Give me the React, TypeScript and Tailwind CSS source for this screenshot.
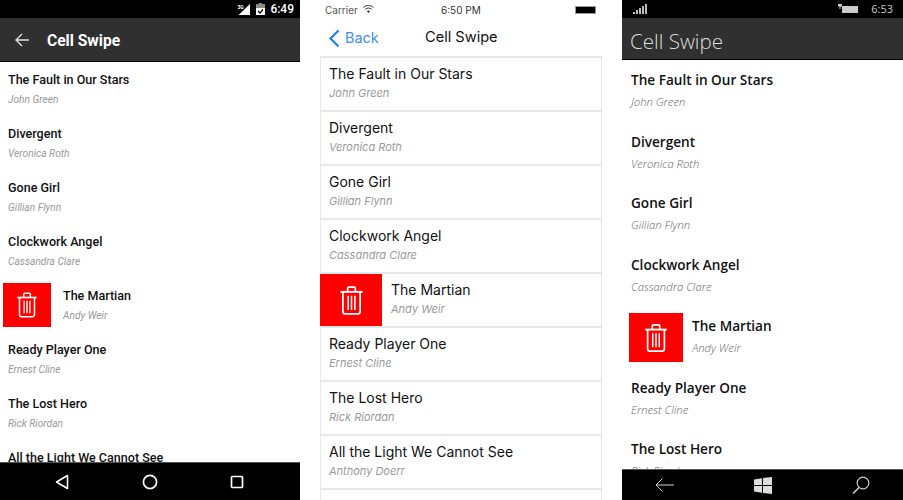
const books = [
    ['The Fault in Our Stars', 'John Green'],
    ['Divergent', 'Veronica Roth'],
    ['Gone Girl', 'Gillian Flynn'],
    ['Clockwork Angel', 'Cassandra Clare'],
    ['The Martian', 'Andy Weir'],
    ['Ready Player One', 'Ernest Cline'],
    ['The Lost Hero', 'Rick Riordan'],
    ['All the Light We Cannot See', 'Anthony Doerr'],
];

function TrashIcon({ width, height }: { width: number; height: number }) {
    return (
        <svg width={width} height={height} viewBox="0 0 24 30" fill="none" stroke="white" strokeWidth="1.8">
            <path d="M0.5 6H23.5" strokeWidth="2" />
            <path d="M8 5.5V2.2C8 1.5 8.5 1 9.2 1H14.8C15.5 1 16 1.5 16 2.2V5.5" />
            <path d="M3 6V26.5C3 28 4 29 5.5 29H18.5C20 29 21 28 21 26.5V6" />
            <path d="M8.5 10V25M12 10V25M15.5 10V25" strokeWidth="1.6" />
        </svg>
    );
}

function AndroidPhone() {
    return (
        <div className="flex h-[500px] w-[300px] shrink-0 flex-col overflow-hidden bg-white font-['Roboto',sans-serif]">
            <div className="flex h-[18px] shrink-0 items-center justify-end bg-black pr-[6px] text-white">
                <svg width="14" height="11" viewBox="0 0 13 11" fill="white" className="mr-[5px]">
                    <path d="M12.5 0V11H1z" />
                    <text x="0" y="5" fontSize="5" fontFamily="Roboto" fontWeight="700">3G</text>
                </svg>
                <svg width="9" height="12" viewBox="0 0 9 12" fill="white" className="mr-[5px]">
                    <path d="M3 0H6V1H9V12H0V1H3z" opacity="0.55" />
                    <path d="M0 5H9V12H0z" />
                    <path d="M2 8L4 10L7 6.5" stroke="black" strokeWidth="1.2" fill="none" />
                </svg>
                <span className="text-[12px] leading-none font-medium">6:49</span>
            </div>
            <div className="flex h-[43px] shrink-0 items-center bg-[#303030] pt-[1px] pl-[15px] text-white">
                <svg width="14" height="14" viewBox="0 0 14 14" fill="none" stroke="#e0e0e0" strokeWidth="1.4">
                    <path d="M14 7H1M7 1L1 7L7 13" />
                </svg>
                <span className="mt-[3px] ml-[18px] text-[15.6px] font-bold">Cell Swipe</span>
            </div>
            <div className="h-[1px] shrink-0 bg-black" />
            <div className="min-h-0 flex-1 overflow-hidden">
                {books.map(([title, author], index) =>
                    index === 4 ? (
                        <div className="flex h-[54px] items-center" key={title}>
                            <div className="ml-[3px] flex h-[44px] w-[48px] items-center justify-center bg-[#ff0000]">
                                <TrashIcon width={20} height={26} />
                            </div>
                            <div className="ml-[12px] pb-[1px]">
                                <p className="text-[12.55px] leading-[18px] font-medium text-[#111]">{title}</p>
                                <p className="mt-[4px] text-[10.2px] leading-[14px] text-[#999] italic">{author}</p>
                            </div>
                        </div>
                    ) : (
                        <div className="flex h-[54px] flex-col justify-center pb-[1px] pl-[8px]" key={title}>
                            <p className="text-[12.55px] leading-[18px] font-medium text-[#111]">{title}</p>
                            <p className="mt-[4px] text-[10.2px] leading-[14px] text-[#999] italic">{author}</p>
                        </div>
                    ),
                )}
            </div>
            <div className="h-[1px] shrink-0 bg-[#555]" />
            <div className="flex h-[37px] shrink-0 items-center justify-between bg-black pr-[56px] pl-[55px]">
                <svg width="14" height="16" viewBox="0 0 14 16" fill="none" stroke="white" strokeWidth="1.6">
                    <path d="M12.5 1.5V14.5L1.5 8z" strokeLinejoin="round" />
                </svg>
                <svg width="16" height="16" viewBox="0 0 16 16" fill="none" stroke="white" strokeWidth="1.7">
                    <circle cx="8" cy="8" r="6.6" />
                </svg>
                <svg width="14" height="14" viewBox="0 0 14 14" fill="none" stroke="white" strokeWidth="1.7">
                    <rect x="1.5" y="1.5" width="11" height="11" rx="1" />
                </svg>
            </div>
        </div>
    );
}

function IosPhone() {
    return (
        <div className="ml-[20px] flex h-[500px] w-[282px] shrink-0 flex-col overflow-hidden bg-white font-['Inter',sans-serif]">
            <div className="relative flex h-[20px] shrink-0 items-center justify-between pr-[6px] pl-[5px] text-[#555]">
                <div className="flex items-center">
                    <span className="text-[10px]">Carrier</span>
                    <svg width="11" height="8" viewBox="0 0 11 8" fill="none" stroke="#333" strokeWidth="1" className="mt-[-2px] ml-[5px]">
                        <path d="M0.5 2.5C3.5 -0.2 7.5 -0.2 10.5 2.5M2.2 4.3C4.2 2.6 6.8 2.6 8.8 4.3" />
                        <path d="M5.5 8L3.8 6C4.8 5.2 6.2 5.2 7.2 6z" fill="#333" stroke="none" />
                    </svg>
                </div>
                <span className="absolute left-[121px] text-[10px] text-[#333]">6:50 PM</span>
                <div className="flex items-center">
                    <div className="h-[6px] w-[19px] bg-black outline outline-[#999]" />
                    <div className="h-[2px] w-[1px] bg-[#888]" />
                </div>
            </div>
            <div className="relative flex h-[36px] shrink-0 items-center pl-[8px]">
                <svg width="12" height="19" viewBox="0 0 12 19" fill="none" stroke="#1a80f7" strokeWidth="2.2">
                    <path d="M10.5 1.5L2.5 9.5L10.5 17.5" />
                </svg>
                <span className="ml-[5px] text-[14.4px] text-[#3b8ef5]">Back</span>
                <span className="absolute left-[105px] text-[14.6px] text-[#111]">Cell Swipe</span>
            </div>
            <div className="min-h-0 flex-1 overflow-hidden">
                {books.map(([title, author], index) =>
                    index === 4 ? (
                        <div className="flex h-[54px] items-stretch border-t-2 border-r border-[#e8e8e8]" key={title}>
                            <div className="flex w-[62px] items-center justify-center bg-[#ff0000]">
                                <TrashIcon width={23} height={29} />
                            </div>
                            <div className="ml-[9px] flex flex-col justify-center pb-[3px]">
                                <p className="text-[14px] leading-[18px] text-[#111]">{title}</p>
                                <p className="mt-[3px] text-[11px] leading-[14px] text-[#999] italic">{author}</p>
                            </div>
                        </div>
                    ) : (
                        <div className="flex h-[54px] flex-col justify-center border-x border-t-2 border-[#e8e8e8] pb-[3px] pl-[8px]" key={title}>
                            <p className="text-[14px] leading-[18px] text-[#111]">{title}</p>
                            <p className="mt-[3px] text-[11px] leading-[14px] text-[#999] italic">{author}</p>
                        </div>
                    ),
                )}
                <div className="h-[12px] border-x border-t-2 border-[#e8e8e8]" />
            </div>
        </div>
    );
}

function WindowsPhone() {
    return (
        <div className="ml-[20px] flex h-[500px] w-[281px] shrink-0 flex-col overflow-hidden bg-white font-['Open_Sans',sans-serif]">
            <div className="flex h-[18px] shrink-0 items-center justify-between bg-black pr-[10px] pl-[11px] text-[#ccc]">
                <svg width="14" height="10" viewBox="0 0 14 10" fill="#bbb">
                    <path d="M0 8H2V10H0zM3 6H5V10H3zM6 4H8V10H6zM9 2H11V10H9zM12 0H14V10H12z" />
                </svg>
                <div className="flex items-center">
                    <svg width="20" height="10" viewBox="0 0 20 10" fill="#ccc" className="mr-[13px]">
                        <path d="M4 2H20V9H4z" />
                        <path d="M0 0H4V2.5H2.5V5H1.5V2.5H0z" />
                    </svg>
                    <span className="text-[11px]">6:53</span>
                </div>
            </div>
            <div className="flex h-[41px] shrink-0 items-center bg-[#303030] pt-[5px] pl-[8px] text-[#ddd]">
                <span className="text-[20.6px] font-light">Cell Swipe</span>
            </div>
            <div className="h-[1px] shrink-0 bg-black" />
            <div className="min-h-0 flex-1 overflow-hidden">
                {books.map(([title, author], index) =>
                    index === 4 ? (
                        <div className="flex h-[61.5px] items-center" key={title}>
                            <div className="mt-[2px] ml-[7px] flex h-[49px] w-[54px] items-center justify-center bg-[#ff0000]">
                                <TrashIcon width={24} height={28} />
                            </div>
                            <div className="ml-[9px] pb-[1px]">
                                <p className="text-[13.6px] leading-[20px] font-semibold text-[#111]">{title}</p>
                                <p className="mt-[4px] text-[11.3px] leading-[16px] font-light text-[#666] italic">{author}</p>
                            </div>
                        </div>
                    ) : (
                        <div className="flex h-[61.5px] shrink-0 flex-col justify-center pb-[1px] pl-[9px]" key={title}>
                            <p className="text-[13.6px] leading-[20px] font-semibold text-[#111]">{title}</p>
                            <p className="mt-[4px] text-[11.3px] leading-[16px] font-light text-[#666] italic">{author}</p>
                        </div>
                    ),
                )}
            </div>
            <div className="h-[1px] shrink-0 bg-[#555]" />
            <div className="flex h-[30px] shrink-0 items-center justify-between bg-black px-[33px]">
                <svg width="19" height="14" viewBox="0 0 19 14" fill="none" stroke="#ccc" strokeWidth="1">
                    <path d="M19 7H1M7.5 0.5L1 7L7.5 13.5" />
                </svg>
                <svg width="18" height="17" viewBox="0 0 18 17" fill="#ddd">
                    <path d="M0 2.5L8 1.2V8H0zM9 1L18 0V8H9zM0 9H8V15.8L0 14.5zM9 9H18V17L9 16z" />
                </svg>
                <svg width="18" height="18" viewBox="0 0 18 18" fill="none" stroke="#ccc" strokeWidth="1.2">
                    <circle cx="11" cy="7" r="5.8" />
                    <path d="M7 11.5L1 17.5" strokeWidth="1.6" />
                </svg>
            </div>
        </div>
    );
}

export default function App() {
    return (
        <div className="flex h-[500px] w-[903px] overflow-hidden bg-white">
            <AndroidPhone />
            <IosPhone />
            <WindowsPhone />
        </div>
    );
}
